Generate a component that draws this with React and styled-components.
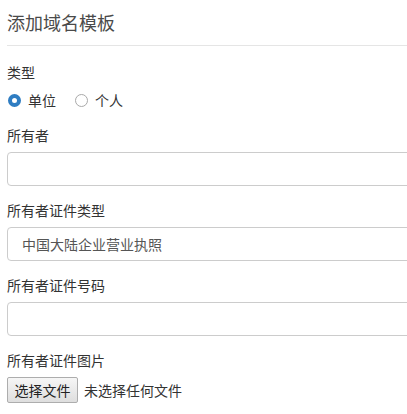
import { createGlobalStyle, styled } from "styled-components";

const GlobalStyle = createGlobalStyle`
  html, body {
    margin: 0;
    padding: 0;
    background: #fff;
    overflow: hidden;
  }
  body {
    font-family: "Noto Sans CJK SC", "Liberation Sans", sans-serif;
    font-size: 14px;
    color: #333;
  }
`;

const Page = styled.div`
  width: 560px;
  padding: 0 7px;
`;

const Header = styled.div`
  padding: 9px 0 10px;
  border-bottom: 1px solid #e5e5e5;
`;

const Title = styled.h3`
  margin: 0;
  font-size: 18px;
  font-weight: normal;
  line-height: 26px;
  color: #4a4a4a;
`;

const Form = styled.form`
  padding-top: 16px;
`;

const Group = styled.div`
  margin-bottom: ${(p) => p.$gap ?? 14}px;
`;

const Label = styled.div`
  line-height: 20px;
  margin-bottom: ${(p) => p.$mb ?? 7}px;
`;

const RadioRow = styled.div`
  display: flex;
  align-items: center;
  height: 20px;
  gap: 19px;
  padding-left: 1px;
`;

const RadioItem = styled.label`
  display: flex;
  align-items: center;
  gap: 7px;
  line-height: 20px;
`;

const Dot = styled.span`
  box-sizing: border-box;
  width: 13px;
  height: 13px;
  border-radius: 50%;
  border: ${(p) => (p.$on ? "4px solid #2f7dc2" : "1px solid #a9a9a9")};
  background: #fff;
`;

const Field = styled.div`
  box-sizing: border-box;
  height: 34px;
  border: 1px solid #ccc;
  border-radius: 4px;
  padding: 0 14px;
  display: flex;
  align-items: center;
  line-height: 20px;
  color: #555;
  background: #fff;
`;

const FileRow = styled.div`
  display: flex;
  align-items: center;
  gap: 6px;
`;

const FileButton = styled.button`
  box-sizing: border-box;
  height: 26px;
  width: 71px;
  padding: 0;
  border: 1px solid #adadad;
  border-radius: 2px;
  background: linear-gradient(#f6f6f6, #dedede);
  font-family: inherit;
  font-size: 14px;
  color: #222;
  line-height: 20px;
`;

const FileText = styled.span`
  line-height: 20px;
  color: #333;
`;

export default function App() {
  return (
    <>
      <GlobalStyle />
      <Page>
        <Header>
          <Title>添加域名模板</Title>
        </Header>
        <Form>
          <Group $gap={15}>
            <Label $mb={8}>类型</Label>
            <RadioRow>
              <RadioItem>
                <Dot $on />
                单位
              </RadioItem>
              <RadioItem>
                <Dot />
                个人
              </RadioItem>
            </RadioRow>
          </Group>
          <Group>
            <Label>所有者</Label>
            <Field />
          </Group>
          <Group>
            <Label>所有者证件类型</Label>
            <Field>中国大陆企业营业执照</Field>
          </Group>
          <Group>
            <Label>所有者证件号码</Label>
            <Field />
          </Group>
          <Group>
            <Label>所有者证件图片</Label>
            <FileRow>
              <FileButton type="button">选择文件</FileButton>
              <FileText>未选择任何文件</FileText>
            </FileRow>
          </Group>
        </Form>
      </Page>
    </>
  );
}
